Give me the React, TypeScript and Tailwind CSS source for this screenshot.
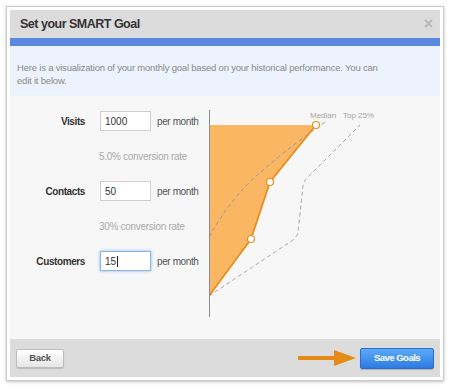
import React from 'react'

const font = { fontFamily: '"Liberation Sans", Arial, sans-serif' }

function Row({ label, value, focused }: { label: string; value: string; focused?: boolean }) {
  return (
    <div className="flex h-[20px] items-center">
      <div className="w-[75px] text-right text-[10px] font-bold tracking-[-0.4px] text-[#333]">{label}</div>
      <div
        className={
          'ml-[15px] flex h-[20px] w-[51px] items-center bg-white px-[4px] text-[10px] text-[#333] ' +
          (focused
            ? 'border border-[#8cb6e6] shadow-[0_0_3px_rgba(90,150,225,0.7)]'
            : 'border border-[#cfcfcf]')
        }
      >
        {value}
        {focused && <span className="ml-[1px] inline-block h-[11px] w-px bg-[#222]" />}
      </div>
      <div className="ml-[6px] text-[10px] tracking-[-0.4px] text-[#555]">per month</div>
    </div>
  )
}

function Rate({ text }: { text: string }) {
  return (
    <div className="flex h-[50px] items-center pl-[89px] text-[10px] tracking-[-0.3px] text-[#aaa]">{text}</div>
  )
}

function Chart() {
  return (
    <svg width="230" height="243" viewBox="0 0 230 243" className="block">
      <polygon points="0,29 107,29 61,86 42,143 0,200" fill="#fbb664" />
      <path
        d="M0,141 Q20,105 45,82 T116,26"
        fill="none"
        stroke="#9a9a9a"
        strokeWidth="1"
        strokeDasharray="4,3"
      />
      <path
        d="M0,200 L81,146 Q88,142 89,136 L94,90 Q95,84 100,80 L151,29"
        fill="none"
        stroke="#a8a8a8"
        strokeWidth="1"
        strokeDasharray="4,3"
      />
      <polyline points="107,29 61,86 42,143 0,200" fill="none" stroke="#e3901e" strokeWidth="1.8" />
      <line x1="0.5" y1="14" x2="0.5" y2="221" stroke="#8c8c8c" strokeWidth="1" />
      {[
        [107, 29],
        [61, 86],
        [42, 143],
      ].map(([x, y]) => (
        <circle key={x} cx={x} cy={y} r="3.5" fill="#fff" stroke="#e3901e" strokeWidth="1.2" />
      ))}
      <text x="101" y="22" fontSize="8" fill="#a5a5a5" style={font}>
        Median
      </text>
      <text x="134" y="22" fontSize="8" fill="#a5a5a5" style={font}>
        Top 25%
      </text>
    </svg>
  )
}

export default function App() {
  return (
    <div className="min-h-screen bg-white pl-[6px] pt-[6px]" style={font}>
      <div className="w-[438px] border border-[#cbcbcb] bg-white p-[3px] shadow-[0_1px_3px_rgba(0,0,0,0.25)]">
        {/* Header */}
        <div className="flex h-[28px] items-center justify-between bg-[#dcdcdc] pl-[10px] pr-[7px]">
          <h1 className="text-[12.5px] font-bold tracking-[-0.5px] text-[#333]">Set your SMART Goal</h1>
          <span className="text-[16px] font-bold leading-none text-[#b8b8b8]">×</span>
        </div>
        <div className="h-[8px] bg-[#5b88e0]" />

        {/* Info */}
        <div className="h-[50px] bg-[#edf3fc] px-[7px] pt-[15px] text-[9.5px] leading-[13px] tracking-[-0.2px] text-[#8a8a8a]">
          Here is a visualization of your monthly goal based on your historical performance. You can
          <br />
          edit it below.
        </div>

        {/* Body */}
        <div className="flex h-[243px] bg-[#f7f7f7]">
          <div className="w-[199px] pt-[15px]">
            <Row label="Visits" value="1000" />
            <Rate text="5.0% conversion rate" />
            <Row label="Contacts" value="50" />
            <Rate text="30% conversion rate" />
            <Row label="Customers" value="15" focused />
          </div>
          <Chart />
        </div>

        {/* Footer */}
        <div className="flex h-[38px] items-center justify-between bg-[#dcdcdc] px-[6px]">
          <button className="h-[19px] w-[48px] rounded-[2px] border border-[#bdbdbd] bg-gradient-to-b from-white to-[#e6e6e6] text-[9.5px] font-bold tracking-[-0.3px] text-[#555] shadow-[0_1px_1px_rgba(0,0,0,0.15)]">
            Back
          </button>
          <div className="flex items-center">
            <svg width="58" height="16" viewBox="0 0 58 16" className="mr-[4px] block">
              <rect x="0" y="6" width="38" height="4" fill="#e88a18" />
              <polygon points="36,0 58,8 36,16" fill="#e88a18" />
            </svg>
            <button className="h-[21px] w-[74px] rounded-[2px] border border-[#2a6fd0] bg-gradient-to-b from-[#5eaaf6] to-[#2c7be2] text-[9.5px] font-bold tracking-[-0.5px] text-white shadow-[0_1px_1px_rgba(0,0,0,0.2)]">
              Save Goals
            </button>
          </div>
        </div>
      </div>
    </div>
  )
}
